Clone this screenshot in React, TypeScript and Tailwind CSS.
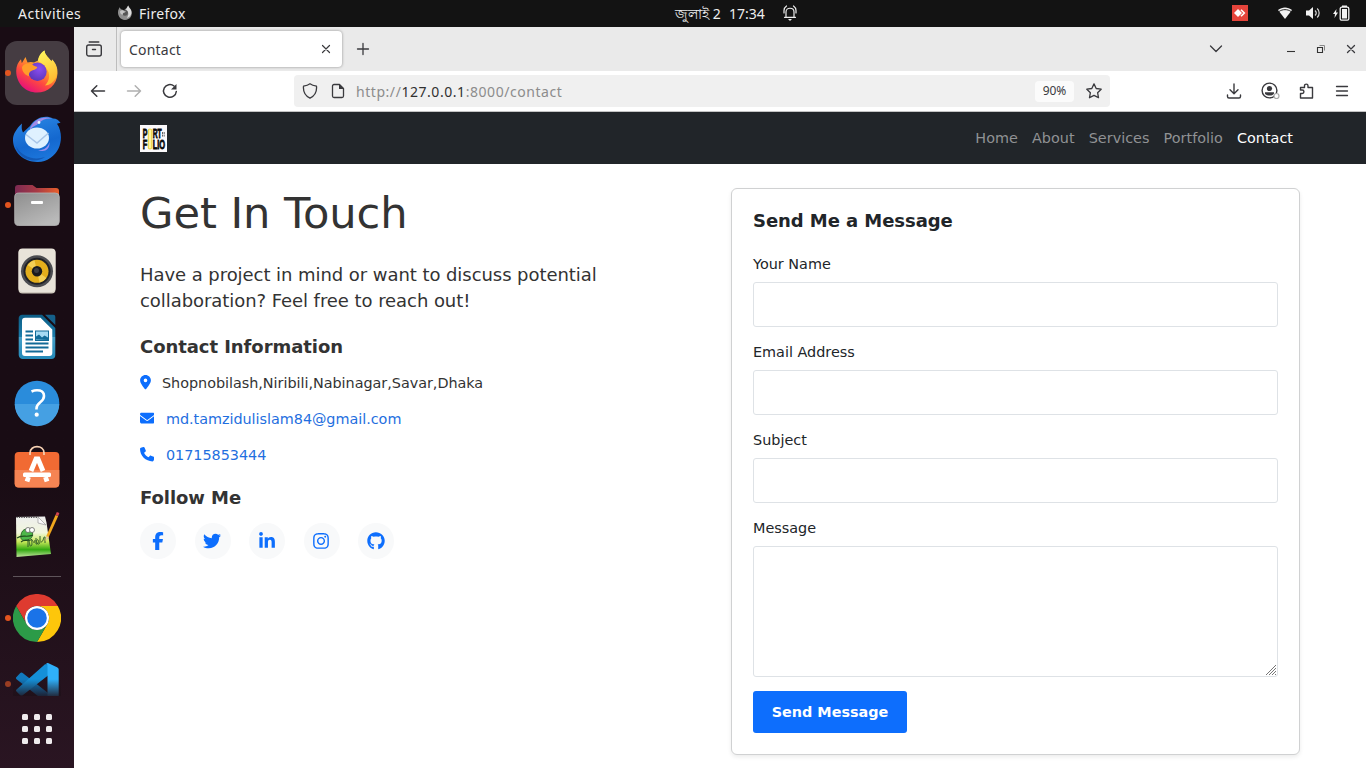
import React from "react";
import {
  FaLocationDot,
  FaEnvelope,
  FaPhone,
  FaFacebookF,
  FaTwitter,
  FaLinkedinIn,
  FaInstagram,
  FaGithub,
} from "react-icons/fa6";

const line = {
  fill: "none",
  stroke: "currentColor",
  strokeWidth: 1.3,
  strokeLinecap: "round" as const,
  strokeLinejoin: "round" as const,
};

function FirefoxGray() {
  return (
    <svg className="relative -top-px" width="16" height="16" viewBox="0 0 16 16">
      <path d="M1.2 5.6 2.5 2.2l1.4 2L7 5.2 9.5 3 11.2.6c.4 1.8 2.2 2.9 3 5 1.8 4.8-1 9.4-6.2 9.4C3 15 .2 10.4 1.2 5.6z" fill="#8f8f8f" />
      <path d="M9 4.700 11.200.6c.4 1.800 2.200 2.900 3 5 1 4-1 6.400-4.500 7.400C12 10 12 7 9 4.700z" fill="#dedede" />
      <circle cx="8" cy="7.800" r="2.900" fill="#565656" />
      <path d="M3 6.500c1-1.500 3-1.500 4.500-.3L9 6.500c-.5 1-2 1-2.700 1.500-.5.500-.5 1.200-.3 1.800C4.200 9.500 3 8.200 3 6.500z" fill="#c4c4c4" />
    </svg>
  );
}

function FirefoxIcon() {
  return (
    <svg className="relative -top-[2px]" width="48" height="48" viewBox="0 0 48 48">
      <defs>
        <linearGradient id="ffBody" x1="0.8" y1="0.05" x2="0.25" y2="0.95">
          <stop offset="0.1" stopColor="#ffe14a" />
          <stop offset="0.4" stopColor="#ff9a2b" />
          <stop offset="0.68" stopColor="#ff4a3f" />
          <stop offset="1" stopColor="#e5107a" />
        </linearGradient>
        <linearGradient id="ffTail" x1="0.3" y1="0" x2="0.6" y2="1">
          <stop offset="0" stopColor="#fff45c" />
          <stop offset="1" stopColor="#ffb52e" />
        </linearGradient>
        <radialGradient id="ffGlobe" cx="0.6" cy="0.35" r="0.7">
          <stop offset="0" stopColor="#8a4df0" />
          <stop offset="1" stopColor="#5a35b8" />
        </radialGradient>
      </defs>
      <path d="M3.200 24c0-5 2-9 4.800-11.800l.8 4L12.500 10l2 5.500c2-.8 4.500-.8 6.500 0l4-2c1-4 3.500-7.500 6.500-10 .8 5 3.500 6 7 11l.8-2c3.500 4 5.500 8 5.200 14C44 38 35 45.500 24 45.500S3.200 37 3.200 24z" fill="url(#ffBody)" />
      <path d="M25 14c.3-4.500 3-8.500 6.500-10.500.3 5 4 6.500 7 11l.5-2c5 6 6.300 12 4 18-2.500 5-7 8-11 8 5-5 5.500-12 1.500-17-2.500-3.800-5-5.500-8.500-7.500z" fill="url(#ffTail)" />
      <circle cx="24.500" cy="24.800" r="9.200" fill="url(#ffGlobe)" />
      <path d="M9 20c3-4.500 9-4 11.500-1.500 1.500 1 3.500.8 3.800 1.700-1 2.800-4.300 2.600-6.300 3.800-2.200 1.500-2.500 3.800-1.800 5.500-4-1.500-7.200-4.500-7.200-9.500z" fill="#ff9d2a" />
    </svg>
  );
}

function ThunderbirdIcon() {
  return (
    <svg className="relative top-px" width="50" height="50" viewBox="0 0 50 50">
      <defs>
        <linearGradient id="tbBody" x1="0.3" y1="0" x2="0.6" y2="1">
          <stop offset="0" stopColor="#2a86e4" />
          <stop offset="0.6" stopColor="#1468cf" />
          <stop offset="1" stopColor="#1d78dd" />
        </linearGradient>
      </defs>
      <path d="M1 24c0-4.500 3-10 9-15.500-.5 3.500-.5 6 1 9L18 11C23 2.500 34 -.5 41 3.500c3.500 0 6 2 7.500 4.500-1.500 0-2.500.2-3.500.7C50 16 50 26 46.500 33.500 43 41 35 47 26 47 12 47.500.5 37 1 24z" fill="url(#tbBody)" />
      <path d="M18 13C22 4.500 31 .5 40 3.500 34 3 29.500 5 26.500 8.500 24 11 20.500 11 18 15z" fill="#a18be8" />
      <path d="M4 31c5 10 17 15 29 11-4 3-10 4.500-15 3C10.500 43.500 5.500 38 4 31z" fill="#1359b5" />
      <circle cx="27" cy="7.500" r="1.400" fill="#eaf6ff" />
      <ellipse cx="25" cy="23" rx="12" ry="10.500" fill="#dff1ff" />
      <path d="M14 19.500 25 28l11.500-10" fill="none" stroke="#a9c6e8" strokeWidth="1.500" />
      <path d="M37.500 27c-1.500 6-6 8.500-11.500 8 6 2.500 12 0 11.500-8z" fill="#9b8ff0" />
    </svg>
  );
}

function FilesIcon() {
  return (
    <svg width="48" height="48" viewBox="0 0 48 48">
      <defs>
        <linearGradient id="flBack" x1="0" x2="1">
          <stop offset="0" stopColor="#7c2a52" />
          <stop offset="0.5" stopColor="#a83a45" />
          <stop offset="1" stopColor="#e8602c" />
        </linearGradient>
        <linearGradient id="flFront" x1="0" y1="0" x2="0.6" y2="1">
          <stop offset="0" stopColor="#8e8e8e" />
          <stop offset="1" stopColor="#b9b9b9" />
        </linearGradient>
      </defs>
      <path d="M5 4h14.500l4 3H43a3 3 0 0 1 3 3v14H2V7a3 3 0 0 1 3-3z" fill="url(#flBack)" />
      <rect x="1.700" y="12" width="44.600" height="32.500" rx="4" fill="url(#flFront)" stroke="#b5b5b5" strokeWidth="0.800" />
      <rect x="18" y="20" width="12" height="3" rx="1" fill="#fff" />
    </svg>
  );
}

function RhythmboxIcon() {
  return (
    <svg width="48" height="48" viewBox="0 0 48 48">
      <rect x="5.500" y="2" width="37" height="44.500" rx="4" fill="#cfc9be" />
      <rect x="5.500" y="1.500" width="37" height="43.500" rx="4" fill="#e8e3d9" />
      <circle cx="24" cy="24.300" r="16" fill="#4c4d51" />
      <circle cx="24" cy="24.300" r="13.500" fill="#202126" />
      <circle cx="24" cy="24.300" r="11.500" fill="#e3ae1c" />
      <path d="M24 24.300 14.500 18a12 12 0 0 1 7-4.800z" fill="#f4cf55" />
      <path d="M24 24.300 33.500 31a12 12 0 0 1-7 4.500z" fill="#f4cf55" />
      <circle cx="24" cy="24.300" r="5.200" fill="#191a1e" />
      <circle cx="23.500" cy="23.500" r="2.500" fill="#3c3d42" />
    </svg>
  );
}

function WriterIcon() {
  return (
    <svg width="48" height="48" viewBox="0 0 48 48">
      <defs>
        <linearGradient id="wr" x1="0" y1="0" x2="0" y2="1">
          <stop offset="0" stopColor="#0d5d85" />
          <stop offset="0.500" stopColor="#1b7dab" />
          <stop offset="0.510" stopColor="#459fc7" />
          <stop offset="1" stopColor="#2389b8" />
        </linearGradient>
      </defs>
      <path d="M9.500 1.700H29L42.300 15V42a4 4 0 0 1-4 4H10a4 4 0 0 1-4.300-4V5.500a3.500 3.500 0 0 1 3.800-3.800z" fill="url(#wr)" />
      <path d="M32 1.700h8.300a2 2 0 0 1 2 2V12z" fill="#15608a" />
      <path d="M12 4.700h15.500L39.300 16.500V40a3 3 0 0 1-3 3H12a3 3 0 0 1-3-3V7.700a3 3 0 0 1 3-3z" fill="#fff" />
      <path d="M12.500 18.500H20M12.500 22.500H20M12.500 26.500H20M12.500 30.500h23M12.500 34.500h23M12.500 38.500H30" stroke="#126b98" strokeWidth="1.800" />
      <rect x="22.500" y="18" width="13" height="9.500" fill="#a6daf3" stroke="#126b98" />
      <path d="M23 26.500v-3l3-2 3 3 2.500-2 3.500 2v2.500z" fill="#126b98" />
    </svg>
  );
}

function HelpIcon() {
  return (
    <svg width="48" height="48" viewBox="0 0 48 48">
      <circle cx="24" cy="24" r="22.300" fill="#2a8cdb" />
      <path d="M1.700 25h44.600a22.300 22.300 0 0 1-44.600 0z" fill="#45a0e3" />
      <path d="M18.500 12.500c5.500-2.500 12.500-1.500 12.500 4.500 0 6.500-7.500 6-7.500 12.500v1" fill="none" stroke="#fff" strokeWidth="2.600" />
      <circle cx="23.700" cy="35.700" r="2.100" fill="#fff" />
    </svg>
  );
}

function SoftwareIcon() {
  return (
    <svg className="relative -top-[2px]" width="48" height="48" viewBox="0 0 48 48">
      <rect x="1.700" y="9" width="44.600" height="35.500" rx="4" fill="#f16a33" />
      <path d="M1.700 27h44.600v13.500a4 4 0 0 1-4 4H5.700a4 4 0 0 1-4-4z" fill="#f58453" />
      <path d="M17 12v-2c0-8.500 14-8.500 14 0v2" fill="none" stroke="#f8d2b4" strokeWidth="1.700" />
      <path d="m14 38.500 1.500-4.500M34 38.500 32.500 34M18 28l5-12h2l5 12" fill="none" stroke="#fff" strokeWidth="4.800" />
      <rect x="10" y="29.500" width="28" height="4.500" rx="1.500" fill="#fff" />
    </svg>
  );
}

function NotepadIcon() {
  return (
    <svg width="48" height="48" viewBox="0 0 48 48">
      <defs>
        <linearGradient id="np" x1="0" y1="0" x2="0" y2="1">
          <stop offset="0" stopColor="#eeeeee" />
          <stop offset="0.400" stopColor="#f1f6dc" />
          <stop offset="0.620" stopColor="#c9e95a" />
          <stop offset="0.820" stopColor="#33a912" />
          <stop offset="1" stopColor="#bfe59a" />
        </linearGradient>
      </defs>
      <path d="M3 6 32 5.500l1.500 6L38 43 3.500 46z" fill="url(#np)" />
      <path d="M3.500 6.300h22" stroke="#4f4f4f" strokeWidth="1.600" strokeDasharray="1.200 1.200" />
      <path d="M25 6v6l8 2z" fill="#fafafa" stroke="#999" strokeWidth="0.700" />
      <path d="M8 24c1-7 7-7 11-4 2 5-1 9-6 9-4 1-6-1-5-5z" fill="#4db84a" stroke="#245c22" strokeWidth="0.800" />
      <path d="M4 27c5-4 10 0 16-3M8 31c4-4 8 1 11-3" fill="none" stroke="#204d1e" strokeWidth="1.100" />
      <circle cx="15" cy="19" r="2.500" fill="#fff" stroke="#555" strokeWidth="0.700" />
      <circle cx="19" cy="19" r="2.500" fill="#fff" stroke="#555" strokeWidth="0.700" />
      <path d="M15 28v8m0-8c2 1 1 8 3 7s0-6 1-6 2 6 3 0m1-2v6c3 1 3-6 1-4s2 7 3 2v-6m1 6c3 0 2-6 4-5v6" fill="none" stroke="#315c2c" strokeWidth="1" />
      <path d="m32.500 30 .8-5L42.500 4l2.700 1-9.400 21z" fill="#f0a71d" />
      <path d="m32.500 30 .8-5 2.500 1z" fill="#e7d0a4" />
      <path d="m42.500 4 1.300-3 2.600 1-1.200 3z" fill="#d64550" />
    </svg>
  );
}

function ChromeIcon() {
  return (
    <svg width="48" height="48" viewBox="0 0 48 48">
      <path d="M3.200 12A24 24 0 0 1 44.800 12H24A12 12 0 0 0 13.600 30z" fill="#de3b30" />
      <path d="M44.800 12A24 24 0 0 1 24 48L34.400 30A12 12 0 0 0 24 12z" fill="#fdc60b" />
      <path d="M24 48A24 24 0 0 1 3.200 12L13.600 30A12 12 0 0 0 34.400 30z" fill="#2c9b48" />
      <circle cx="24" cy="24" r="12" fill="#fff" />
      <circle cx="24" cy="24" r="9.800" fill="#1a73e8" />
    </svg>
  );
}

function CodeIcon() {
  return (
    <svg width="48" height="48" viewBox="0 0 48 48">
      <defs>
        <linearGradient id="vsFade" x1="0" y1="0" x2="0" y2="1">
          <stop offset="0.400" stopColor="#1e1019" stopOpacity="0" />
          <stop offset="0.760" stopColor="#1e1019" stopOpacity="0.850" />
        </linearGradient>
      </defs>
      <path d="M3.500 17 7 13.200c1-.8 2-.8 3 0L35 33v11L3.500 19.200c-.8-.8-.8-1.500 0-2.200z" fill="#1179bd" />
      <path d="M35 4v11.500L10 35c-1 .8-2 .8-3 0l-3.500-3.500c-.6-.8-.6-1.500 0-2L32 4.200z" fill="#1590d8" />
      <path d="M32.500 4c1-1 2-1.200 3-.8l8.500 4c1 .6 1.700 1.200 1.700 2.300v29c0 1-.7 2-1.700 2.300l-8.500 4c-1 .4-2 .2-3-.8 1 .5 2 0 2-1.500V5.500c0-1.500-1-2-2-1.500z" fill="#2fb0fa" />
      <rect width="48" height="48" fill="url(#vsFade)" />
    </svg>
  );
}

function DockItem({ children, running, active }: { children: React.ReactNode; running?: boolean; active?: boolean }) {
  return (
    <div className="flex h-16 w-full shrink-0 items-center">
      <div className="flex w-[5px] justify-end">
        <span className={running ? "relative left-[6px] z-10 size-[6px] shrink-0 rounded-full bg-[#e2541f]" : "hidden"} />
      </div>
      <div className={active ? "flex size-16 items-center justify-center rounded-xl bg-[#453c42]" : "flex size-16 items-center justify-center"}>
        {children}
      </div>
    </div>
  );
}

function Dock() {
  return (
    <aside className="flex w-[74px] shrink-0 flex-col overflow-hidden bg-linear-to-b from-[#190c14] from-60% to-[#2a1522] pt-[14px]">
      <div className="flex flex-col gap-[2px]">
        <DockItem running active><FirefoxIcon /></DockItem>
        <DockItem><ThunderbirdIcon /></DockItem>
        <DockItem running><FilesIcon /></DockItem>
        <DockItem><RhythmboxIcon /></DockItem>
        <DockItem><WriterIcon /></DockItem>
        <DockItem><HelpIcon /></DockItem>
        <DockItem><SoftwareIcon /></DockItem>
        <DockItem><NotepadIcon /></DockItem>
      </div>
      <div className="mx-[13px] mt-[9px] mb-[9px] h-px shrink-0 bg-[#5e545a]" />
      <div className="flex h-[110px] shrink-0 flex-col gap-[2px] overflow-hidden">
        <DockItem running><ChromeIcon /></DockItem>
        <div className="flex h-16 w-full shrink-0 items-center">
          <span className="ml-[5px] size-[6px] rounded-full bg-[#9a3d22]" />
          <div className="-ml-[6px] flex size-16 items-center justify-center"><CodeIcon /></div>
        </div>
      </div>
      <div className="mx-auto mt-[18px] grid grid-cols-3 gap-[6px]">
        {Array.from({ length: 9 }, (_, i) => (
          <span key={i} className="size-[6px] rounded-[1.5px] bg-[#efebed]" />
        ))}
      </div>
    </aside>
  );
}

function TopBar() {
  return (
    <header className="flex h-[27px] shrink-0 items-center bg-[#131313] text-[14px] text-[#eeeeee]">
      <span className="ml-[18px] w-[99px] pb-px tracking-[0.5px]">Activities</span>
      <FirefoxGray />
      <span className="ml-[6px] w-[536px] pb-px tracking-[0.3px]">Firefox</span>
      <span className="w-[47px] pb-px whitespace-nowrap">জুলাই 2</span>
      <span className="ml-[7px] w-[37px] pb-px whitespace-nowrap">17:34</span>
      <svg className="ml-[16px] -mt-px" width="16" height="18" viewBox="0 0 16 18">
        <path {...line} strokeWidth={1.200} d="M2.500 13.300h11M4 13V8c0-5 8-5 8 0v5M2 9V6.500C2 4.500 3 3 4.500 2M14 9V6.500c0-2-1-3.500-2.500-4.500" />
        <path d="M6 15h4l-2 2z" fill="currentColor" />
      </svg>
      <div className="ml-auto flex items-center pb-px">
        <svg width="16" height="16" viewBox="0 0 16 16">
          <rect width="16" height="16" fill="#e5443b" />
          <path d="m6 4 4 4-4 4-4-4z" fill="#fff" />
          <path d="m9 4.700 3.300 3.300L9 11.300" fill="none" stroke="#fff" strokeWidth="1.600" />
        </svg>
        <svg className="ml-[29px]" width="16" height="16" viewBox="0 0 16 16">
          <path d="M8 14 1 5c4-3.500 10-3.500 14 0z" fill="#f2f2f2" />
          <path d="M2 6.500c3.500-2.500 8.500-2.500 12 0" fill="none" stroke="#131313" strokeWidth="0.900" />
        </svg>
        <svg className="ml-[12px]" width="16" height="16" viewBox="0 0 16 16">
          <path d="M1 5.500h3L8 2v12l-4-3.500H1z" fill="#f2f2f2" />
          <path d="M10 5.500c1.500 1.500 1.500 3.500 0 5M12.200 3.500c2.600 2.500 2.600 6.500 0 9" fill="none" stroke="#d5d5d5" strokeWidth="1.200" />
        </svg>
        <svg className="mr-[16px] ml-[11px]" width="18" height="16" viewBox="0 0 18 16">
          <path d="M4.500 4 1 9h2l-.5 4L6 7.500H4z" fill="#f2f2f2" />
          <path d="M10 .5h5V2h-5z" fill="#f2f2f2" />
          <rect x="8.200" y="2.200" width="8.600" height="13" rx="1.500" fill="none" stroke="#f2f2f2" strokeWidth="1.300" />
          <rect x="10" y="4" width="5" height="9.500" fill="#f2f2f2" />
        </svg>
      </div>
    </header>
  );
}

function TabStrip() {
  return (
    <div className="flex h-11 shrink-0 items-center bg-[#eaeaea] text-[#3a3a3e]">
      <div className="flex h-full w-[43px] items-center justify-center border-r border-[#bdbdbd] pr-[2px]">
        <svg width="16" height="16" viewBox="0 0 16 16">
          <path {...line} strokeWidth={1.400} d="M3.200 1h9.600M2.700 4h10.600c1 0 2 .8 2 2v7c0 1-.8 2-2 2H2.700c-1.200 0-2-1-2-2V6c0-1.200.8-2 2-2zM6.500 8.500h3" />
        </svg>
      </div>
      <div className="ml-[4px] flex h-9 w-[221px] items-center justify-between rounded bg-white pr-[11px] pl-[8px] text-[14px] shadow-[0_0_3px_rgba(0,0,0,0.4)]">
        <span className="tracking-[0.2px]">Contact</span>
        <svg width="10" height="10" viewBox="0 0 10 10"><path {...line} strokeWidth={1.200} d="m1.500 1.500 7 7m0-7-7 7" /></svg>
      </div>
      <svg className="ml-[14px]" width="14" height="14" viewBox="0 0 14 14"><path {...line} d="M7 1.500v11M1.500 7h11" /></svg>
      <div className="mr-[10px] ml-auto flex items-center">
        <svg width="14" height="10" viewBox="0 0 14 10"><path {...line} d="m1.500 2 5.500 5.500L12.500 2" /></svg>
        <svg className="ml-[63px]" width="10" height="10" viewBox="0 0 10 10"><path d="M1 7.500h8" stroke="#333" strokeWidth="1.100" /></svg>
        <svg className="ml-[20px]" width="10" height="10" viewBox="0 0 10 10">
          <path d="M1.500 3.500h5v5h-5z" fill="none" stroke="#333" strokeWidth="1.100" />
          <path d="M3.500 1.500h5v5" fill="none" stroke="#888" />
        </svg>
        <svg className="ml-[20px]" width="10" height="10" viewBox="0 0 10 10"><path {...line} d="m1.500 1.500 7 7m0-7-7 7" /></svg>
      </div>
    </div>
  );
}

function UrlBar() {
  return (
    <div className="flex h-[41px] shrink-0 items-center border-b border-[#c3c3c3] bg-white text-[#3a3a3e]">
      <svg className="ml-4" width="16" height="16" viewBox="0 0 16 16"><path {...line} strokeWidth={1.500} d="M14.500 8H1.500m5.300-5.300L1.500 8l5.300 5.300" /></svg>
      <svg className="ml-5 text-[#b0b0b0]" width="16" height="16" viewBox="0 0 16 16"><path {...line} strokeWidth={1.500} d="M1.500 8h13M9.200 2.700 14.500 8l-5.300 5.300" /></svg>
      <svg className="ml-5" width="16" height="16" viewBox="0 0 16 16">
        <path {...line} strokeWidth={1.500} d="M14.300 8.500A6.400 6.400 0 1 1 12 3" />
        <path d="M14.500 1v5.500H9z" fill="currentColor" />
      </svg>
      <div className="ml-[116px] flex h-8 w-[816px] items-center rounded bg-[#f0f0f0] pl-[8px]">
        <svg width="16" height="16" viewBox="0 0 16 16"><path {...line} d="M8 .8c2 1.500 4 2 6.500 2.400.5 5.300-1.200 9.500-6.500 12C2.700 12.700 1 8.500 1.500 3.200 4 2.800 6 2.300 8 .8z" /></svg>
        <svg className="ml-3" width="16" height="16" viewBox="0 0 16 16">
          <path {...line} d="M9.500 1.500H4A1.500 1.500 0 0 0 2.500 3v10A1.500 1.500 0 0 0 4 14.500h8a1.500 1.500 0 0 0 1.500-1.500V5.500z" />
          <path d="M9 1v5h5z" fill="currentColor" />
        </svg>
        <span className="ml-[10px] text-[14px] tracking-[0.55px] text-[#8c8c8c]">http://<span className="text-[#303030]">127.0.0.1</span>:8000/contact</span>
        <span className="ml-auto flex h-[21px] w-[39px] items-center justify-center rounded-sm bg-[#fbfbfb] text-[12px]">90%</span>
        <svg className="mr-[8px] ml-[12px]" width="16" height="16" viewBox="0 0 16 16">
          <path {...line} d="m8 .9 2.200 4.600 5 .7-3.600 3.500.9 5L8 12.400l-4.500 2.300.9-5L.8 6.200l5-.7z" />
        </svg>
      </div>
      <div className="mr-[17px] ml-auto flex items-center">
        <svg width="16" height="16" viewBox="0 0 16 16"><path {...line} strokeWidth={1.400} d="M8 1v9.500M4 6.700l4 4 4-4M1.500 12v1.500c0 1 .7 1.500 1.500 1.500h10c.8 0 1.500-.5 1.500-1.500V12" /></svg>
        <svg className="ml-[19px]" width="19" height="18" viewBox="0 0 19 18">
          <circle {...line} cx="8.500" cy="8.500" r="7.400" strokeWidth={1.400} />
          <circle cx="8.500" cy="6.500" r="2.600" fill="currentColor" />
          <path d="M4 10.300h9v1.200c-1 2.800-8 2.800-9 0z" fill="currentColor" />
          <circle cx="15.500" cy="14" r="2.500" fill="#fff" stroke="#aaa" strokeWidth="1.200" />
        </svg>
        <svg className="ml-[19px]" width="16" height="16" viewBox="0 0 16 16">
          <path {...line} strokeWidth={1.400} d="M1.500 15V10.500h1.700c2.300 0 2.300-3.500 0-3.500H1.500V4.500h4V2.800c0-2.300 3.500-2.300 3.500 0v1.700h4.500V15z" />
        </svg>
        <svg className="ml-[20px]" width="14" height="14" viewBox="0 0 14 14"><path {...line} d="M1.500 2.500h11M1.500 7h11M1.500 11.500h11" /></svg>
      </div>
    </div>
  );
}

function Logo() {
  return (
    <svg className="bg-[#fbf9fb] font-['Liberation_Sans'] font-bold" width="27" height="27" viewBox="0 0 27 27">
      <rect x="8.300" y="4" width="3.400" height="20" rx="1.700" fill="#fff3a0" stroke="#ecd54a" strokeWidth="1.200" />
      <g transform="scale(1 1.600)" fontSize="7.800" fill="#0a0a0a" stroke="#0a0a0a" strokeWidth="0.500">
        <text x="2.700" y="8" textLength="4.600" lengthAdjust="spacingAndGlyphs">P</text>
        <text x="12.700" y="8" textLength="9" lengthAdjust="spacingAndGlyphs">RT</text>
        <text x="2.700" y="15.300" textLength="4.500" lengthAdjust="spacingAndGlyphs">F</text>
        <text x="12.700" y="15.300" textLength="12.500" lengthAdjust="spacingAndGlyphs">LIO</text>
      </g>
      <path d="M22.500 7v5M24.200 7v5" stroke="#555" strokeWidth="0.900" strokeDasharray="2 0.600" />
    </svg>
  );
}

function SiteNav() {
  return (
    <nav className="flex h-[52px] shrink-0 items-center justify-between bg-[#212529] pr-[73px] pl-[66px] text-[14.4px] text-[#909294]">
      <Logo />
      <div className="flex gap-[14.200px] pt-[2px]">
        <a>Home</a>
        <a>About</a>
        <a>Services</a>
        <a>Portfolio</a>
        <a className="text-white">Contact</a>
      </div>
    </nav>
  );
}

function ContactInfo() {
  return (
    <section className="w-[569px] text-[#333333]">
      <h1 className="-mt-px text-[43.2px] leading-[52px] tracking-[-0.08px]">Get In Touch</h1>
      <p className="mt-[23px] text-[18px] leading-[26px] tracking-[-0.06px]">
        Have a project in mind or want to discuss potential
        <br />
        collaboration? Feel free to reach out!
      </p>
      <h2 className="mt-[22px] text-[18px] leading-[22px] font-bold tracking-[-0.06px]">Contact Information</h2>
      <ul className="mt-[7px] text-[14.4px] tracking-[-0.03px] text-[#1f6fe0]">
        <li className="flex h-9 items-center">
          <FaLocationDot className="-mt-px h-[14.400px] w-[11px] text-[#0d6efd]" />
          <span className="ml-[11px] pt-[2px] text-[#333333]">Shopnobilash,Niribili,Nabinagar,Savar,Dhaka</span>
        </li>
        <li className="flex h-9 items-center">
          <FaEnvelope className="-mt-px size-[14.400px] text-[#0d6efd]" />
          <a className="ml-[11.500px] pt-[2px]">md.tamzidulislam84@gmail.com</a>
        </li>
        <li className="flex h-9 items-center">
          <FaPhone className="-mt-px size-[14.400px] text-[#0d6efd]" />
          <a className="ml-[11.500px] pt-[2px]">01715853444</a>
        </li>
      </ul>
      <h2 className="mt-[14px] text-[18px] leading-[22px] font-bold tracking-[-0.06px]">Follow Me</h2>
      <div className="mt-[14px] flex gap-[18.600px] text-[18px] text-[#0d6efd]">
        {[FaFacebookF, FaTwitter, FaLinkedinIn, FaInstagram, FaGithub].map((Icon, i) => (
          <a key={i} className="flex size-9 items-center justify-center rounded-full bg-[#f8f9fa] pr-px">
            <Icon />
          </a>
        ))}
      </div>
    </section>
  );
}

function Field({ label }: { label: string }) {
  return (
    <label className="mb-[15px] block">
      <span className="mb-2 block h-5 leading-5">{label}</span>
      <input className="block h-[45px] w-full rounded-[3px] border border-[#dee2e6] bg-white" />
    </label>
  );
}

function MessageForm() {
  return (
    <form className="h-[567px] w-[569px] rounded-md border border-[#d0d1d2] bg-white px-[21px] pt-[21px] text-[14.4px] text-[#212529] shadow-[0_2px_4px_rgba(0,0,0,0.08)]">
      <h2 className="mb-[22px] text-[18px] leading-[22px] font-bold tracking-[-0.06px]">Send Me a Message</h2>
      <Field label="Your Name" />
      <Field label="Email Address" />
      <Field label="Subject" />
      <label className="block">
        <span className="mb-2 block h-5 leading-5">Message</span>
        <div className="flex h-[131px] items-end justify-end rounded-[3px] border border-[#dee2e6] pr-px pb-px">
          <svg width="10" height="10" viewBox="0 0 10 10"><path d="M0 10 10 0M3 10l7-7M6 10l4-4M9 10l1-1" stroke="#666" strokeWidth="0.900" /></svg>
        </div>
      </label>
      <button type="button" className="mt-[14px] h-[42px] w-[154px] rounded-[3px] bg-[#0d6efd] pt-[2px] font-bold text-white">Send Message</button>
    </form>
  );
}

export default function App() {
  return (
    <div className="flex h-[768px] w-[1366px] flex-col overflow-hidden bg-white font-['Noto_Sans',sans-serif]">
      <TopBar />
      <div className="flex min-h-0 flex-1">
        <Dock />
        <div className="flex min-w-0 flex-1 flex-col">
          <TabStrip />
          <UrlBar />
          <div className="flex min-h-0 flex-1 flex-col font-['DejaVu_Sans',sans-serif]">
            <SiteNav />
            <main className="flex justify-between pt-6 pr-[66px] pl-[66px]">
              <ContactInfo />
              <MessageForm />
            </main>
          </div>
        </div>
      </div>
    </div>
  );
}
